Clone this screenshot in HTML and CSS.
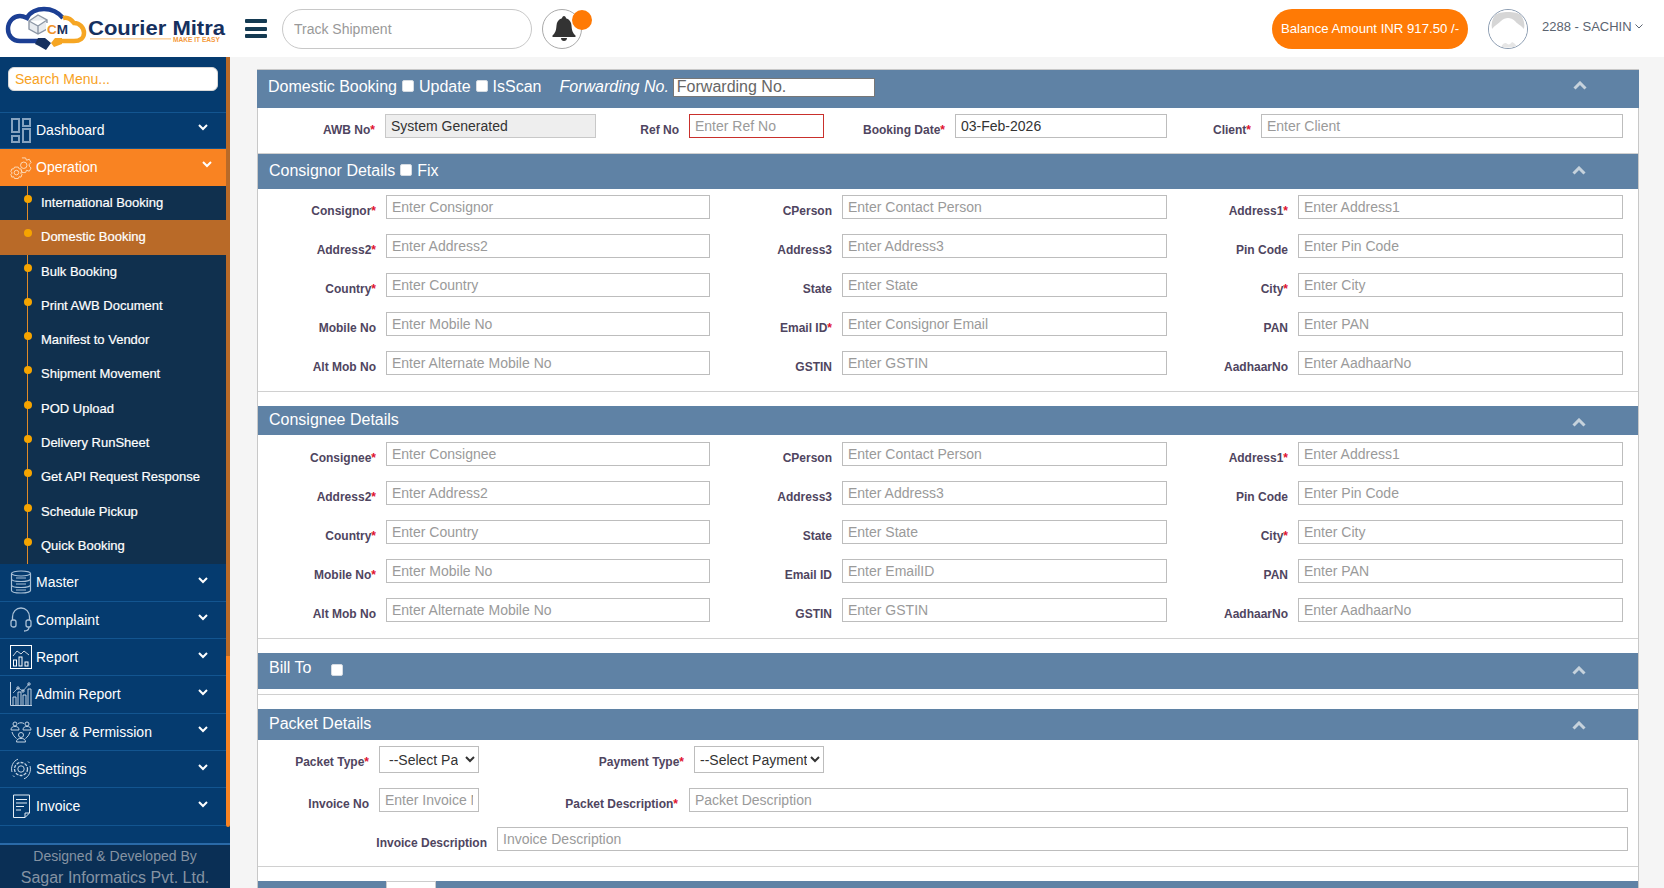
FILE: index.html
```html
<!DOCTYPE html>
<html lang="en">
<head>
<meta charset="utf-8">
<title>Domestic Booking</title>
<link rel="stylesheet" href="styles.css">
</head>
<body>
<header class="topbar">
  <a class="logo">
    <svg width="230" height="57" viewBox="0 0 230 57">
      <path d="M38 41H20C12 41 8 35 8 29C8 21 14 16 20 16C23 16 25 17 27 18C30 12 37 9 44 9C52 9 58 12 63 18" fill="none" stroke="#1c3f94" stroke-width="4.500"/>
      <path d="M63 18C67 17 71 19 74 23C80 23 84 28 84 33C84 38 80 41 74 41H57" fill="none" stroke="#f6a623" stroke-width="4.500"/>
      <path d="M29 21L38 15L47 20V29L38 34L29 29Z M29 21L38 26L47 20 M38 26V34" fill="#e8ebef" stroke="#8d97a6" stroke-width="1.400"/>
      <rect x="46" y="23" width="25" height="12" fill="#fff"/>
      <path d="M38 38L45 38L51 43L46 50L39 46L35 44Z" fill="#16305e"/>
      <path d="M51 43L55 38H62V44L54 47Z" fill="#f6a623"/>
      <text class="logo-cm" x="47" y="34">C<tspan class="logo-m">M</tspan></text>
      <text class="logo-name" x="88" y="35" textLength="137" lengthAdjust="spacingAndGlyphs">Courier Mitra</text>
      <rect x="90" y="38" width="81" height="1.600" fill="#fbd5a5"/>
      <text class="logo-tag" x="173" y="41.500">MAKE IT EASY</text>
    </svg>
  </a>
  <button class="burger" type="button" aria-label="Menu"><span></span><span></span><span></span></button>
  <input class="track" type="text" placeholder="Track Shipment">
  <div class="bell">
    <svg width="24" height="25" viewBox="0 0 24 25"><path d="M12 0C13 0 14 1 14 2.300C17.500 3.200 19.300 6 19.500 9.500C19.800 14 20.500 16.800 23.500 19.500V21H.5V19.500C3.500 16.800 4.200 14 4.500 9.500C4.700 6 6.500 3.200 10 2.300C10 1 11 0 12 0ZM9 22H15C15 23.700 13.700 25 12 25C10.300 25 9 23.700 9 22Z" fill="#333"/></svg>
    <span class="badge"></span>
  </div>
  <div class="balance">Balance Amount INR 917.50 /-</div>
  <div class="avatar">
    <svg width="38" height="38" viewBox="0 0 38 38"><circle cx="19" cy="19" r="19" fill="#fff"/><path d="M6 5C10 1 28 1 32 5C35 10 36 14 35 19C32 15 28 14 26 11C22 7 16 7 12 11C9 14 6 15 3 19C2 14 3 9 6 5Z" fill="#d6d6d6"/><path d="M12 38C13 34 15 33 17 33C19 35 21 35 23 32C26 33 27 35 28 37Z" fill="#e6e6e6"/></svg>
  </div>
  <div class="user">2288 - SACHIN
    <svg width="8" height="5" viewBox="0 0 8 5"><path d="M.5.5L4 4L7.500.5" fill="none" stroke="#5b6470" stroke-width="1"/></svg>
  </div>
</header>

<div class="layout">
  <aside class="sidebar">
    <div class="side-scroll">
      <div class="side-col">
        <div class="side-search"><input type="text" placeholder="Search Menu..."></div>
        <nav class="menu">
          <a class="item first">
            <svg class="ico" width="22" height="26" viewBox="0 0 22 26"><g fill="none" stroke="#86a3c0" stroke-width="2"><rect x="2" y="1" width="7" height="13"/><rect x="13" y="1" width="7" height="7"/><rect x="2" y="18" width="7" height="6"/><rect x="13" y="11" width="7" height="13"/></g></svg>
            <span>Dashboard</span><svg class="chev" width="10" height="7" viewBox="0 0 10 7"><path d="M1 1L5 5L9 1" fill="none" stroke="#fff" stroke-width="2"/></svg>
          </a>
          <a class="item active">
            <svg class="ico" width="22" height="24" viewBox="0 0 24 24"><g fill="none" stroke="#fde0c2" stroke-width="1"><circle cx="15" cy="9" r="3.500"/><path d="M13 1H17L18 3.500L21 2.500L23 6L21 8V10L23 12L21 15.500L18 14.500L17 17H13L12 14.500"/><circle cx="7" cy="17" r="2.500"/><path d="M5 11H9L10 13L12 13L13 16L11.500 17.500L13 19L12 22L10 21.500L9 23.500H5L4 21.500L2 22L1 19L2.500 17.500L1 16L2 13L4 13Z"/></g></svg>
            <span>Operation</span><svg class="chev shift" width="10" height="7" viewBox="0 0 10 7"><path d="M1 1L5 5L9 1" fill="none" stroke="#fff" stroke-width="2"/></svg>
          </a>
          <ul class="sub">
            <li>International Booking</li>
            <li class="on">Domestic Booking</li>
            <li>Bulk Booking</li>
            <li>Print AWB Document</li>
            <li>Manifest to Vendor</li>
            <li>Shipment Movement</li>
            <li>POD Upload</li>
            <li>Delivery RunSheet</li>
            <li>Get API Request Response</li>
            <li>Schedule Pickup</li>
            <li>Quick Booking</li>
          </ul>
          <a class="item">
            <svg class="ico" width="22" height="24" viewBox="0 0 22 24"><g fill="none" stroke="#a9c0d6" stroke-width="1.200"><ellipse cx="11" cy="3.500" rx="9.500" ry="2.500"/><path d="M1.500 3.500V20.500C1.500 22 6 23 11 23C16 23 20.500 22 20.500 20.500V3.500M1.500 9C1.500 10.500 6 11.500 11 11.500C16 11.500 20.500 10.500 20.500 9M1.500 15C1.500 16.500 6 17.500 11 17.500C16 17.500 20.500 16.500 20.500 15M6 8H16M6 14H16M6 20H16"/></g></svg>
            <span>Master</span><svg class="chev" width="10" height="7" viewBox="0 0 10 7"><path d="M1 1L5 5L9 1" fill="none" stroke="#fff" stroke-width="2"/></svg>
          </a>
          <a class="item">
            <svg class="ico" width="22" height="25" viewBox="0 0 22 25"><g fill="none" stroke="#a9c0d6" stroke-width="1.300"><path d="M2.500 13V10C2.500 5 6 1 11 1C16 1 19.500 5 19.500 10V13"/><rect x="1" y="13" width="5" height="7" rx="2"/><rect x="16" y="13" width="5" height="7" rx="2"/><path d="M19 20C19 22.500 17 24 14 24"/></g></svg>
            <span>Complaint</span><svg class="chev" width="10" height="7" viewBox="0 0 10 7"><path d="M1 1L5 5L9 1" fill="none" stroke="#fff" stroke-width="2"/></svg>
          </a>
          <a class="item">
            <svg class="ico" width="22" height="24" viewBox="0 0 22 24"><g fill="none" stroke="#fff" stroke-width="1"><rect x=".5" y=".5" width="21" height="23"/><path d="M3 11L7 6L11 9L14 6L19 10" stroke-width=".8"/><rect x="3.500" y="15" width="3" height="6"/><rect x="9" y="12" width="3" height="9"/><rect x="15" y="17" width="3" height="4"/></g></svg>
            <span>Report</span><svg class="chev" width="10" height="7" viewBox="0 0 10 7"><path d="M1 1L5 5L9 1" fill="none" stroke="#fff" stroke-width="2"/></svg>
          </a>
          <a class="item narrow">
            <svg class="ico" width="22" height="24" viewBox="0 0 22 24"><g fill="none" stroke="#c2d2e2" stroke-width="1"><path d="M.5 0V23.500H22"/><path d="M3 23V15H6V23M8 23V10H11V23M13 23V13H16V23M18 23V7H21V23"/><path d="M3 11L8 6L13 9L19 2" stroke-width=".8"/><circle cx="8" cy="6" r="1.200"/><circle cx="13" cy="9" r="1.200"/><circle cx="19" cy="2" r="1.200"/></g></svg>
            <span>Admin Report</span><svg class="chev" width="10" height="7" viewBox="0 0 10 7"><path d="M1 1L5 5L9 1" fill="none" stroke="#fff" stroke-width="2"/></svg>
          </a>
          <a class="item">
            <svg class="ico" width="22" height="22" viewBox="0 0 22 22"><g fill="none" stroke="#c2d2e2" stroke-width="1"><circle cx="5" cy="3" r="2"/><path d="M1 9C1 6 3 5.500 5 5.500C7 5.500 9 6 9 9Z"/><circle cx="17" cy="3" r="2"/><path d="M13 9C13 6 15 5.500 17 5.500C19 5.500 21 6 21 9Z"/><circle cx="11" cy="14" r="2.500"/><path d="M6.500 21C6.500 18 8.500 17.500 11 17.500C13.500 17.500 15.500 18 15.500 21Z"/><path d="M8 2.500C10 1.500 12 1.500 14 2.500M2 11C3 14 4.500 16 6.500 17.500M20 11C19 14 17.500 16 15.500 17.500"/></g></svg>
            <span>User &amp; Permission</span><svg class="chev" width="10" height="7" viewBox="0 0 10 7"><path d="M1 1L5 5L9 1" fill="none" stroke="#fff" stroke-width="2"/></svg>
          </a>
          <a class="item">
            <svg class="ico" width="22" height="22" viewBox="0 0 22 22"><g fill="none" stroke="#c2d2e2" stroke-width="1"><circle cx="11" cy="11" r="3.200"/><circle cx="11" cy="11" r="6.500" stroke-width="1.300" stroke-dasharray="3 1.200"/><path d="M2 14C.5 9 3 3 8 1.200M20 8C21.500 13 19 19 14 20.800M18 3.500L19.500 5M3 17.500L4.500 19"/></g></svg>
            <span>Settings</span><svg class="chev" width="10" height="7" viewBox="0 0 10 7"><path d="M1 1L5 5L9 1" fill="none" stroke="#fff" stroke-width="2"/></svg>
          </a>
          <a class="item">
            <svg class="ico" width="22" height="24" viewBox="0 0 22 24"><g fill="none" stroke="#e4edf5" stroke-width="1"><path d="M3.500 1H19.500V19L15 23.500H3.500Z"/><path d="M19 19H15V23.500"/><path d="M6 5.500H17M6 9H17M6 12.500H14M6 16H11" stroke-width="1.100"/></g></svg>
            <span>Invoice</span><svg class="chev" width="10" height="7" viewBox="0 0 10 7"><path d="M1 1L5 5L9 1" fill="none" stroke="#fff" stroke-width="2"/></svg>
          </a>
        </nav>
      </div>
      <div class="side-bar"><div class="bar-top"></div><div class="bar-thumb"></div></div>
    </div>
    <footer class="side-foot">
      <div class="f1">Designed &amp; Developed By</div>
      <div class="f2">Sagar Informatics Pvt. Ltd.</div>
    </footer>
  </aside>

  <main class="main">
    <div class="card">
      <section class="sec sec-a">
        <div class="head head-a">
          <div class="head-l">
            <span>Domestic Booking</span><input type="checkbox"><span>Update</span><input type="checkbox"><span>IsScan</span>
            <em class="fwd">Forwarding No.</em><input class="fwd-in" type="text" placeholder="Forwarding No.">
          </div>
          <svg class="up" width="14" height="9" viewBox="0 0 14 9"><path d="M1.500 7.500L7 2L12.500 7.500" fill="none" stroke="#c6d2dc" stroke-width="3"/></svg>
        </div>
        <div class="grid-top">
          <label>AWB No<i>*</i></label><input class="ro" type="text" value="System Generated">
          <label>Ref No</label><input class="red" type="text" placeholder="Enter Ref No">
          <label>Booking Date<i>*</i></label><input type="text" value="03-Feb-2026">
          <label>Client<i>*</i></label><input type="text" placeholder="Enter Client">
        </div>
      </section>

      <section class="sec">
        <div class="head head-b">
          <div class="head-l"><span>Consignor Details</span><input type="checkbox"><span>Fix</span></div>
          <svg class="up" width="14" height="9" viewBox="0 0 14 9"><path d="M1.500 7.500L7 2L12.500 7.500" fill="none" stroke="#c6d2dc" stroke-width="3"/></svg>
        </div>
        <div class="grid-form">
          <label>Consignor<i>*</i></label><input type="text" placeholder="Enter Consignor">
          <label>CPerson</label><input type="text" placeholder="Enter Contact Person">
          <label>Address1<i>*</i></label><input type="text" placeholder="Enter Address1">
          <label>Address2<i>*</i></label><input type="text" placeholder="Enter Address2">
          <label>Address3</label><input type="text" placeholder="Enter Address3">
          <label>Pin Code</label><input type="text" placeholder="Enter Pin Code">
          <label>Country<i>*</i></label><input type="text" placeholder="Enter Country">
          <label>State</label><input type="text" placeholder="Enter State">
          <label>City<i>*</i></label><input type="text" placeholder="Enter City">
          <label>Mobile No</label><input type="text" placeholder="Enter Mobile No">
          <label>Email ID<i>*</i></label><input type="text" placeholder="Enter Consignor Email">
          <label>PAN</label><input type="text" placeholder="Enter PAN">
          <label>Alt Mob No</label><input type="text" placeholder="Enter Alternate Mobile No">
          <label>GSTIN</label><input type="text" placeholder="Enter GSTIN">
          <label>AadhaarNo</label><input type="text" placeholder="Enter AadhaarNo">
        </div>
      </section>

      <section class="sec">
        <div class="head head-c">
          <div class="head-l"><span>Consignee Details</span></div>
          <svg class="up" width="14" height="9" viewBox="0 0 14 9"><path d="M1.500 7.500L7 2L12.500 7.500" fill="none" stroke="#c6d2dc" stroke-width="3"/></svg>
        </div>
        <div class="grid-form">
          <label>Consignee<i>*</i></label><input type="text" placeholder="Enter Consignee">
          <label>CPerson</label><input type="text" placeholder="Enter Contact Person">
          <label>Address1<i>*</i></label><input type="text" placeholder="Enter Address1">
          <label>Address2<i>*</i></label><input type="text" placeholder="Enter Address2">
          <label>Address3</label><input type="text" placeholder="Enter Address3">
          <label>Pin Code</label><input type="text" placeholder="Enter Pin Code">
          <label>Country<i>*</i></label><input type="text" placeholder="Enter Country">
          <label>State</label><input type="text" placeholder="Enter State">
          <label>City<i>*</i></label><input type="text" placeholder="Enter City">
          <label>Mobile No<i>*</i></label><input type="text" placeholder="Enter Mobile No">
          <label>Email ID</label><input type="text" placeholder="Enter EmailID">
          <label>PAN</label><input type="text" placeholder="Enter PAN">
          <label>Alt Mob No</label><input type="text" placeholder="Enter Alternate Mobile No">
          <label>GSTIN</label><input type="text" placeholder="Enter GSTIN">
          <label>AadhaarNo</label><input type="text" placeholder="Enter AadhaarNo">
        </div>
      </section>

      <section class="sec">
        <div class="head head-d">
          <div class="head-l"><span>Bill To</span><input class="bill-check" type="checkbox"></div>
          <svg class="up" width="14" height="9" viewBox="0 0 14 9"><path d="M1.500 7.500L7 2L12.500 7.500" fill="none" stroke="#c6d2dc" stroke-width="3"/></svg>
        </div>
        <div class="bill-gap"></div>
      </section>

      <section class="sec">
        <div class="head head-e">
          <div class="head-l"><span>Packet Details</span></div>
          <svg class="up" width="14" height="9" viewBox="0 0 14 9"><path d="M1.500 7.500L7 2L12.500 7.500" fill="none" stroke="#c6d2dc" stroke-width="3"/></svg>
        </div>
        <div class="packet">
          <div class="p-row">
            <label class="l-a">Packet Type<i>*</i></label>
            <select class="s-a"><option>--Select Packet Type--</option></select>
            <label class="l-b">Payment Type<i>*</i></label>
            <select class="s-b"><option>--Select Payment Type--</option></select>
          </div>
          <div class="p-row">
            <label class="l-a">Invoice No</label>
            <input class="s-a" type="text" placeholder="Enter Invoice No">
            <label class="l-c">Packet Description<i>*</i></label>
            <input class="grow" type="text" placeholder="Packet Description">
          </div>
          <div class="p-row">
            <label class="l-d">Invoice Description</label>
            <input class="grow" type="text" placeholder="Invoice Description">
          </div>
        </div>
      </section>

      <section class="sec sec-last">
        <div class="head head-f"><input class="last-in" type="text"></div>
      </section>
    </div>
  </main>
</div>
</body>
</html>
```
FILE: styles.css
```css
* { box-sizing: border-box; }
html, body { margin: 0; height: 888px; overflow: hidden; }
body { font-family: "Liberation Sans", Arial, sans-serif; background: #f5f5f5; color: #333; }
input, select, button { font-family: inherit; }

/* top bar */
.topbar { height: 57px; background: #fff; display: flex; align-items: center; }
.logo { width: 245px; height: 57px; flex: none; display: block; }
.logo svg { display: block; }
.logo-name { font: 700 20.5px "Liberation Sans", Arial, sans-serif; fill: #16305e; }
.logo-tag { font: 700 6.6px "Liberation Sans", Arial, sans-serif; fill: #f59a3c; }
.logo-cm { font: 700 13.5px "Liberation Sans", Arial, sans-serif; fill: #f0932b; }
.logo-m { fill: #16305e; }
.burger { width: 22px; height: 19px; padding: 0; border: 0; background: none; display: flex; flex-direction: column; justify-content: space-between; flex: none; }
.burger span { display: block; height: 4px; background: #143a52; border-radius: 1px; }
.track { width: 250px; height: 40px; margin-left: 15px; padding: 0 11px; border: 1px solid #c8c8c8; border-radius: 20px; font-size: 14px; flex: none; outline: 0; }
.track::placeholder { color: #999; }
.bell { position: relative; width: 40px; height: 40px; margin-left: 10px; padding-left: 4px; border: 1px solid #aaa; border-radius: 50%; display: flex; align-items: center; justify-content: center; flex: none; }
.badge { position: absolute; top: 0; right: -11px; width: 20px; height: 20px; background: #ff7a05; border-radius: 50%; }
.balance { margin-left: auto; width: 196px; height: 40px; line-height: 40px; text-align: center; background: #ff7a05; color: #fff; font-size: 13.2px; border-radius: 20px; flex: none; }
.avatar { width: 40px; height: 40px; margin-left: 20px; border: 1px solid #8a9bb0; border-radius: 50%; flex: none; overflow: hidden; }
.avatar svg { display: block; }
.user { width: 122px; margin-left: 14px; padding-bottom: 4px; font-size: 13px; color: #5b6470; white-space: nowrap; flex: none; }
.user svg { vertical-align: 2px; }

/* layout */
.layout { display: flex; height: 831px; }
.sidebar { width: 230px; flex: none; display: flex; flex-direction: column; background: #053b6f; }
.side-scroll { display: flex; height: 786px; }
.side-col { width: 226px; flex: none; }
.side-bar { width: 4px; display: flex; flex-direction: column; }
.bar-top { height: 599px; background: #b96a28; }
.bar-thumb { height: 171px; background: #f98322; border-radius: 0 0 2px 2px; }
.side-search { height: 55px; padding: 10px 0 0 8px; }
.side-search input { width: 210px; height: 24px; padding: 0 6px; border: 1px solid #d8d8d8; border-radius: 6px; font-size: 14px; background: #fff; outline: 0; }
.side-search input::placeholder { color: #f7a21e; }

.item { display: flex; align-items: center; height: 37.33px; padding-left: 10px; color: #fff; font-size: 14px; border-bottom: 1px solid #135590; }
.item.first { border-top: 1px solid #135590; height: 37px; padding-bottom: 2px; }
.item.first .ico { margin-top: 2px; }
.item.active { background: #f98322; border-bottom: 0; height: 37px; padding-bottom: 2px; }
.item .ico { flex: none; margin-right: 4px; }
.item.active .ico { margin-top: 2px; }
.item.narrow .ico { margin-right: 3px; }
.item .chev { margin-left: auto; margin-right: 18px; margin-top: -4px; }
.item .chev.shift { margin-right: 14px; }
.sub { list-style: none; margin: 0; padding: 0 0 1px; background: #10304e; position: relative; }
.sub::before { content: ""; position: absolute; left: 27px; top: 0; bottom: 0; width: 1px; background: #e08a28; }
.sub li { position: relative; height: 34.3px; line-height: 34px; padding-left: 41px; color: #fff; font-size: 13px; -webkit-text-stroke: .2px #fff; }
.sub li::before { content: ""; position: absolute; left: 23.5px; top: 9px; width: 8px; height: 8px; border-radius: 50%; background: #f6a400; }
.sub li.on { background: #b96a28; }

.side-foot { flex: 1; border-top: 2px solid #2a6aa8; background: #0a2f55; text-align: center; overflow: hidden; }
.f1 { font-size: 14px; line-height: 21px; margin-top: 1px; color: #8593a3; }
.f2 { font-size: 16px; line-height: 22px; color: #8593a3; }

/* main */
.main { flex: 1; min-width: 0; padding: 12px 25px 0 27px; overflow: hidden; }
.card { background: #fff; border-left: 1px solid #c8c8c8; border-right: 1px solid #c8c8c8; border-top: 1px solid #c8c8c8; }
.sec { border-bottom: 1px solid #d0d0d0; margin-bottom: 14px; }
.sec-a { margin-bottom: 0; }
.sec-last { margin-bottom: 0; border-bottom: 0; }
.head { display: flex; justify-content: space-between; align-items: flex-start; background: #5f82a5; color: #fff; font-size: 16px; padding-left: 11px; padding-right: 52px; }
.head-a { height: 38px; margin: 0 -1px; padding-top: 7px; }
.head-b { height: 35px; padding-top: 7px; }
.head-c { height: 29px; padding-top: 4px; }
.head-d { height: 36px; padding-top: 5px; }
.head-e { height: 31px; padding-top: 5px; }
.head-f { height: 20px; }
.head .up { flex: none; margin-top: 4px; }
.head-a .up { margin-top: 4px; }
.head-b .up { margin-top: 5px; }
.head-c .up { margin-top: 8px; }
.head-d .up { margin-top: 8px; }
.head-e .up { margin-top: 7px; }
.head-l { display: flex; align-items: center; line-height: 20px; }
.head-l input[type="checkbox"] { appearance: none; width: 12px; height: 12px; margin: 0 5px 3px 5px; background: #fff; border: 1px solid #d5dbe2; border-radius: 2px; }
.fwd { margin-left: 18px; }
.fwd-in { width: 202px; height: 19px; margin-left: 4px; padding: 0 3px; border: 1px solid #777; font-size: 16px; color: #555; background: #fff; outline: 0; }
.fwd-in::placeholder { color: #666; }
.head-l input.bill-check[type="checkbox"] { align-self: flex-start; margin: 6px 0 0 20px; }
.bill-gap { height: 5px; }
.last-in { width: 50px; height: 20px; margin-left: 117px; border: 1px solid #ccc; background: #fff; }

label { display: block; height: 24px; line-height: 32px; text-align: right; font-size: 12px; font-weight: 700; color: #4f4560; white-space: nowrap; }
label i { font-style: normal; color: #e0102f; }
.grid-top input, .grid-form input, .packet input, .packet select { width: 100%; min-width: 0; height: 24px; padding: 0 5px; border: 1px solid #bdbdbd; border-radius: 0; background: #fff; font-size: 14px; color: #333; outline: 0; }
.grid-top input::placeholder, .grid-form input::placeholder, .packet input::placeholder { color: #9a9a9a; }
.grid-top { display: grid; grid-template-columns: 117px 211px 73px 135px 111px 212px 74px 362px; column-gap: 10px; padding: 6px 0 15px; }
.grid-top .ro { background: #eee; border-color: #c8c8c8; }
.grid-top .red { border-color: #c9302c; }
.grid-form { display: grid; grid-template-columns: 118px 324px 112px 325px 111px 325px; gap: 15px 10px; padding: 6px 0 16px; }
.head-c + .grid-form { padding-top: 7px; }
.packet { display: flex; flex-direction: column; gap: 15px; padding: 6px 10px 15px 0; }
.p-row { display: flex; align-items: flex-start; column-gap: 10px; }
.l-a { width: 111px; flex: none; }
.packet .s-a { width: 100px; flex: none; }
.packet select { height: 27px; }
.packet select.s-a { padding: 0 4px 0 5px; }
.packet select.s-b { padding: 0 0 0 1px; }
.l-b { width: 195px; flex: none; }
.packet .s-b { width: 130px; flex: none; }
.l-c { width: 189px; flex: none; margin-right: 1px; }
.l-d { width: 229px; flex: none; }
.packet .grow { flex: 1; width: auto; }
```
